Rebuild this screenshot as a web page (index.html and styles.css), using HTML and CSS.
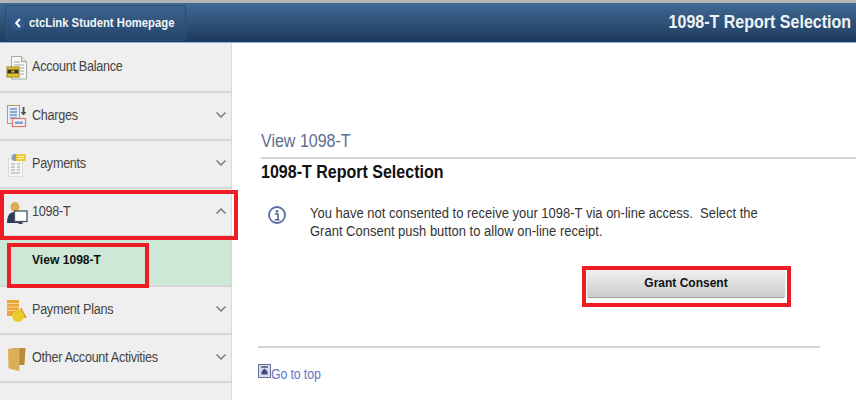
FILE: index.html
```html
<!DOCTYPE html>
<html lang="en">
<head>
<meta charset="utf-8">
<title>1098-T Report Selection</title>
<link rel="stylesheet" href="styles.css">
</head>
<body>
<div class="page">
  <header class="topbar">
    <a class="home-btn"><span class="back-dot"><svg width="8" height="10" viewBox="0 0 8 10"><path d="M5.800 1 2.200 5l3.600 4" fill="none" stroke="#fff" stroke-width="2"/></svg></span><span class="home-label">ctcLink Student Homepage</span></a>
    <h1 class="page-title">1098-T Report Selection</h1>
  </header>
  <div class="body-row">
    <nav class="sidebar">
      <div class="nav-item first">
        <svg class="nav-icon" width="22" height="24" viewBox="0 0 22 24"><path d="M5.500 .5h10l5 5v17.500h-15z" fill="#f7f7f4" stroke="#a9a9a2"/><path d="M15.500 .5v5h5" fill="#e4e4e0" stroke="#a9a9a2"/><path d="M8 6h6M8 9h10M14 12h4M14 15h4M14 18h4" stroke="#a5a5a0"/><rect x="1" y="11" width="12" height="10" fill="#e8c52c" stroke="#9b8726"/><rect x="1.500" y="13.500" width="11" height="4" fill="#37352a"/><rect x="5.500" y="14.500" width="3" height="2" fill="#d8b92c"/></svg>
        <span class="nav-label">Account Balance</span>
      </div>
      <div class="nav-item">
        <svg class="nav-icon" width="22" height="24" viewBox="0 0 22 24"><rect x="1.500" y=".5" width="12" height="18" fill="#e8eef5" stroke="#b59a6a"/><path d="M4 4h7M4 7h7M4 10h7M4 13h7" stroke="#6c93c4" stroke-width="1.300"/><path d="M17.500 2v6" stroke="#555" stroke-width="2"/><path d="M14.500 7h6l-3 3.500z" fill="#555"/><rect x="6.500" y="13.500" width="13" height="8" fill="#eef3fa" stroke="#e2766a" stroke-width="1.200"/><rect x="9" y="16.500" width="8" height="2.500" fill="#7ea3d0"/></svg>
        <span class="nav-label">Charges</span><svg class="chev" width="12" height="8" viewBox="0 0 12 8"><path d="M1.500 1.500 6 6l4.500-4.500" fill="none" stroke="#777" stroke-width="1.500"/></svg>
      </div>
      <div class="nav-item">
        <svg class="nav-icon" width="22" height="24" viewBox="0 0 22 24"><rect x="2.500" y="6" width="14" height="17.500" fill="#f6f6f3" stroke="#dcdcd8"/><path d="M5 11h4M11 11h3M5 14h4M11 14h3M5 17h4M11 17h3M5 20h9" stroke="#a3a3a3"/><circle cx="9" cy="4.500" r="3.500" fill="#8f9cae"/><rect x="10" y="1" width="10" height="7" rx="1" fill="#eccb3c"/><path d="M12 3.500h6M12 5.500h6" stroke="#fff3b0"/></svg>
        <span class="nav-label">Payments</span><svg class="chev" width="12" height="8" viewBox="0 0 12 8"><path d="M1.500 1.500 6 6l4.500-4.500" fill="none" stroke="#777" stroke-width="1.500"/></svg>
      </div>
      <div class="nav-item">
        <svg class="nav-icon" width="22" height="24" viewBox="0 0 22 24"><ellipse cx="9" cy="6" rx="4.500" ry="5" fill="#dcae4e"/><path d="M1 22c0-8 3-11 8-11s6 3 6 11z" fill="#2c3d5c"/><rect x="8.500" y="10" width="12.500" height="10.500" fill="#fff" stroke="#4a5568" stroke-width="1.300"/><path d="M12.500 22h4" stroke="#3a4454" stroke-width="2"/></svg>
        <span class="nav-label">1098-T</span><svg class="chev" width="12" height="8" viewBox="0 0 12 8"><path d="M1.500 6.500 6 2l4.500 4.500" fill="none" stroke="#777" stroke-width="1.500"/></svg>
      </div>
      <div class="sub-item"><span class="sub-label">View 1098-T</span></div>
      <div class="nav-item">
        <svg class="nav-icon" width="22" height="24" viewBox="0 0 22 24"><rect x="1" y="1" width="12" height="16" fill="#eca53a"/><path d="M1 4.500h12M1 8h12M1 11.500h12" stroke="#f8d79a"/><path d="M15 8l6 11h-9z" fill="#eb9b2e"/><circle cx="12" cy="17" r="6" fill="#eacb2e"/></svg>
        <span class="nav-label">Payment Plans</span><svg class="chev" width="12" height="8" viewBox="0 0 12 8"><path d="M1.500 1.500 6 6l4.500-4.500" fill="none" stroke="#777" stroke-width="1.500"/></svg>
      </div>
      <div class="nav-item">
        <svg class="nav-icon" width="22" height="24" viewBox="0 0 22 24"><path d="M4 1h15.500l-1 17h-6v-15z" fill="#b88c3a"/><path d="M2 2l11.500-1v23l-9-2-2-1z" fill="#dcae57"/></svg>
        <span class="nav-label">Other Account Activities</span><svg class="chev" width="12" height="8" viewBox="0 0 12 8"><path d="M1.500 1.500 6 6l4.500-4.500" fill="none" stroke="#777" stroke-width="1.500"/></svg>
      </div>
    </nav>
    <main class="content">
      <div class="crumb"><span class="narrow">View 1098-T</span></div>
      <h2 class="section-title"><span class="narrow">1098-T Report Selection</span></h2>
      <div class="message">
        <svg class="info" width="20" height="20" viewBox="0 0 20 20"><circle cx="10" cy="10" r="8" fill="#fff" stroke="#5b6ea3" stroke-width="1.800"/><circle cx="10" cy="6.200" r="1.300" fill="#4c5f96"/><path d="M8 9h3v5.500h1.200M7.800 14.800h4.600" fill="none" stroke="#4c5f96" stroke-width="1.500"/></svg>
        <p>You have not consented to receive your 1098-T via on-line access.&nbsp; Select the<br>Grant Consent push button to allow on-line receipt.</p>
      </div>
      <div class="actions"><button class="grant" type="button">Grant Consent</button></div>
      <hr class="rule">
      <a class="top-link"><svg width="13" height="14" viewBox="0 0 13 14"><rect x=".5" y=".5" width="12" height="13" fill="#d9ddec" stroke="#6a7396"/><path d="M3 3h7" stroke="#3b4a80" stroke-width="1.400"/><path d="M6.500 4.500 3.500 7.500h6zM3.500 7.500v3h6v-3z" fill="#3b4a80"/></svg><span class="top-label">Go to top</span></a>
    </main>
  </div>
  <div class="mark mark-nav"></div>
  <div class="mark mark-sub"></div>
  <div class="mark mark-btn"></div>
</div>
</body>
</html>
```
FILE: styles.css
```css
* { box-sizing: border-box; }
html, body { margin: 0; padding: 0; background: #fff; }
body { font-family: "Liberation Sans", Arial, sans-serif; }
.page { position: relative; width: 856px; height: 400px; overflow: hidden; border-top: 3px solid #b4b4b2; }
.topbar { height: 40px; display: flex; align-items: center; justify-content: space-between; padding: 0 5px; background: linear-gradient(#416a94, #1d3a5c); border-bottom: 1px solid #8fb0d8; }
.home-btn { height: 36px; width: 181px; display: flex; align-items: center; gap: 4px; padding-left: 5px; margin-top: 1px; color: #f2f5f8; font-size: 12px; font-weight: 700; background: linear-gradient(#3d628b, #24456b); border: 1px solid #2b4c73; border-radius: 3px; }
.home-label { display: inline-block; white-space: nowrap; transform: scaleX(.94); transform-origin: left center; }
.back-dot { width: 14px; height: 14px; display: flex; align-items: center; justify-content: center; border-radius: 50%; background: #34598a; }
.page-title { margin: 0; color: #f0f3f6; font-size: 18px; font-weight: 700; transform: scaleX(.89); transform-origin: right center; }
.body-row { display: flex; height: 357px; }
.sidebar { width: 232px; flex: none; background: #efefef; border-right: 1px solid #d9d9d9; }
.nav-item { height: 48px; display: flex; align-items: center; padding: 0 4px 2px 7px; color: #444; font-size: 14px; letter-spacing: -.3px; border-bottom: 2px solid #d6d6d6; }
.nav-item.first { height: 50px; }
.nav-icon { flex: none; margin: 4px 4px 0 -1px; }
.nav-label { flex: 1; transform: scaleX(.9); transform-origin: left center; }
.chev { flex: none; }
.sub-item { height: 50px; padding: 15px 0 0 32px; background: #cde8d6; color: #111; font-size: 13px; font-weight: 700; border-bottom: 2px solid #d6d6d6; }
.sub-label { display: inline-block; transform: scaleX(.93); transform-origin: left center; }
.content { flex: 1; min-width: 0; padding: 88px 0 0 29px; }
.narrow { display: inline-block; white-space: nowrap; transform: scaleX(.89); transform-origin: left center; }
.crumb { height: 28px; color: #5d6d91; font-size: 18px; line-height: 20px; border-bottom: 2px solid #d4d4d4; }
.section-title { margin: 1px 0 0; color: #111; font-size: 18px; font-weight: 700; line-height: 24px; }
.message { display: flex; align-items: flex-start; margin-top: 20px; padding-left: 6px; }
.info { flex: none; margin: 1px 23px 0 0; }
.message p { margin: 0; color: #333; font-size: 14px; line-height: 18px; transform: scaleX(.928); transform-origin: left center; white-space: nowrap; }
.actions { margin: 27px 0 0 326px; }
.grant { width: 198px; height: 30px; display: block; padding: 1px 0 0; border: 0; border-radius: 2px; background: linear-gradient(#f3f3f3, #cdcdcd); box-shadow: 0 1px 1px #999; color: #111; font: 700 12px "Liberation Sans", Arial, sans-serif; }
.rule { width: 562px; height: 2px; margin: 49px 0 0 -3px; border: 0; background: #d4d4d4; }
.top-link { display: flex; align-items: flex-start; margin: 16px 0 0 -3px; color: #6478c8; font-size: 14px; letter-spacing: -.2px; }
.top-label { display: inline-block; padding-top: 2px; white-space: nowrap; transform: scaleX(.89); transform-origin: left center; }
.mark { position: absolute; border: 4px solid #ee1c25; }
.mark-nav { left: 0; top: 187px; width: 238px; height: 50px; }
.mark-sub { left: 7px; top: 240px; width: 142px; height: 45px; }
.mark-btn { left: 582px; top: 263px; width: 209px; height: 41px; }
```
